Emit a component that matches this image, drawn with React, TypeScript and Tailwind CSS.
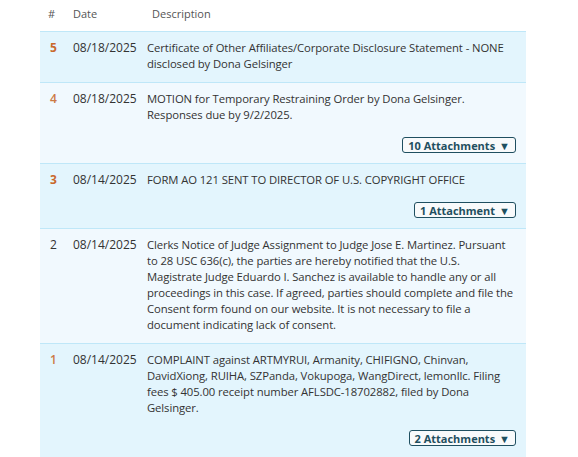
const ENTRIES = [
  {
    n: '5',
    tone: 'bold',
    date: '08/18/2025',
    text: 'Certificate of Other Affiliates/Corporate Disclosure Statement - NONE disclosed by Dona Gelsinger',
    attach: null,
  },
  {
    n: '4',
    tone: 'semi',
    date: '08/18/2025',
    text: 'MOTION for Temporary Restraining Order by Dona Gelsinger. Responses due by 9/2/2025.',
    attach: '10 Attachments',
  },
  {
    n: '3',
    tone: 'bold',
    date: '08/14/2025',
    text: 'FORM AO 121 SENT TO DIRECTOR OF U.S. COPYRIGHT OFFICE',
    attach: '1 Attachment',
  },
  {
    n: '2',
    tone: 'plain',
    date: '08/14/2025',
    text: 'Clerks Notice of Judge Assignment to Judge Jose E. Martinez. Pursuant to 28 USC 636(c), the parties are hereby notified that the U.S. Magistrate Judge Eduardo I. Sanchez is available to handle any or all proceedings in this case. If agreed, parties should complete and file the Consent form found on our website. It is not necessary to file a document indicating lack of consent.',
    attach: null,
  },
  {
    n: '1',
    tone: 'semi',
    date: '08/14/2025',
    text: 'COMPLAINT against ARTMYRUI, Armanity, CHIFIGNO, Chinvan, DavidXiong, RUIHA, SZPanda, Vokupoga, WangDirect, lemonllc. Filing fees $ 405.00 receipt number AFLSDC-18702882, filed by Dona Gelsinger.',
    attach: '2 Attachments',
  },
];

function NumCell({ n, tone }: { n: string; tone: string }) {
  if (tone === 'bold') return <span className="font-bold text-[#c9692c]">{n}</span>;
  if (tone === 'semi') return <span className="font-semibold text-[#cc7a45]">{n}</span>;
  return <span className="text-[#333]">{n}</span>;
}

export default function App() {
  return (
    <div
      className="h-[457px] w-[578px] overflow-hidden bg-white pl-[40px] pr-[52px] text-[12px] leading-[16px] text-[#333]"
      style={{ fontFamily: '"Open Sans", "Noto Sans", sans-serif' }}
    >
      <div className="grid h-[31px] grid-cols-[33px_74px_1fr] pt-[6px] text-[11px] text-[#555]">
        <span className="pl-[8px]">#</span>
        <span>Date</span>
        <span className="pl-[5px]">Description</span>
      </div>
      <div className="border-t border-[#bfe7f8]">
        {ENTRIES.map((e, i) => (
          <div
            key={e.n}
            className={`grid grid-cols-[33px_74px_1fr] border-b border-[#bfe7f8] pt-[8px] ${
              i === ENTRIES.length - 1 ? 'pb-[14px]' : 'pb-[8px]'
            } ${i % 2 === 0 ? 'bg-[#e3f5fd]' : 'bg-[#f1f9fe]'}`}
          >
            <div className="pl-[10px]">
              <NumCell n={e.n} tone={e.tone} />
            </div>
            <div>{e.date}</div>
            <div className="pr-[10px] pb-[2px]">
              <p className="text-[11.3px] tracking-[-0.1px]">{e.text}</p>
              {e.attach && (
                <div className="mt-[14px] flex justify-end">
                  <button className="flex h-[16px] items-center gap-[4px] rounded-[3px] border border-[#1f4f60] bg-[#f8fafb] px-[5px] text-[11px] font-bold leading-none text-[#1f4f60]">
                    {e.attach}
                    <span className="text-[11px]">▼</span>
                  </button>
                </div>
              )}
            </div>
          </div>
        ))}
      </div>
    </div>
  );
}
